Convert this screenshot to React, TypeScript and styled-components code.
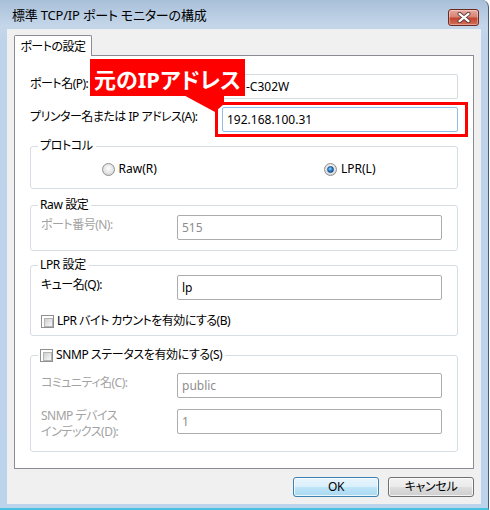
import React from 'react';
import styled, { createGlobalStyle } from 'styled-components';

const GlobalStyle = createGlobalStyle`
  html, body {
    margin: 0;
    padding: 0;
    background: #ffffff;
  }
  body {
    font-family: "Noto Sans", "Noto Sans CJK JP", sans-serif;
    font-size: 12px;
    font-feature-settings: "palt";
    color: #000000;
  }
  * {
    box-sizing: border-box;
  }
`;

const Window = styled.div`
  width: 489px;
  height: 510px;
  display: flex;
  flex-direction: column;
  padding: 0 7px 4px 7px;
  background: linear-gradient(to bottom, #a9c0d9 0px, #c4d6e9 26px, #bed3ea 40px, #bcd3ec 100%);
  border-right: 1px solid #4a5d73;
  border-bottom: 2px solid #48c3df;
  border-top-right-radius: 7px;
`;

const TitleBar = styled.div`
  height: 29px;
  flex: none;
  display: flex;
  align-items: flex-start;
  justify-content: space-between;
  padding: 0 2px 0 5px;
`;

const TitleText = styled.span`
  margin-top: 7px;
  font-size: 13px;
  line-height: 17px;
  letter-spacing: -0.2px;
  color: #000000;
`;

const CloseButton = styled.div`
  margin-top: 9px;
  width: 31px;
  height: 17px;
  border: 1px solid #6b2a24;
  border-radius: 3px;
  display: flex;
  align-items: center;
  justify-content: center;
  background: linear-gradient(to bottom, #e7aa9e 0%, #d98474 45%, #c2452f 55%, #d5705a 100%);
  box-shadow: inset 0 0 0 1px rgba(255, 255, 255, 0.35);
`;

const Client = styled.div`
  flex: 1;
  display: flex;
  flex-direction: column;
  background: #f0f0f0;
  padding: 6px 7px 7px 7px;
`;

const Tab = styled.div`
  align-self: flex-start;
  position: relative;
  z-index: 1;
  width: 78px;
  height: 21px;
  margin-bottom: -1px;
  display: flex;
  align-items: center;
  justify-content: center;
  letter-spacing: -0.5px;
  background: #ffffff;
  border: 1px solid #898c95;
  border-bottom: none;
  border-radius: 2px 2px 0 0;
`;

const Panel = styled.div`
  position: relative;
  flex: 1;
  background: #ffffff;
  border: 1px solid #898c95;
  padding: 18px 15px 16px 15px;
`;

const Row = styled.div<{ $label: number; $mt?: number }>`
  display: grid;
  grid-template-columns: ${p => p.$label}px 1fr;
  align-items: start;
  margin-top: ${p => p.$mt ?? 0}px;
`;

const Label = styled.div<{ $disabled?: boolean }>`
  padding-top: 2px;
  line-height: 16px;
  letter-spacing: -0.5px;
  color: ${p => (p.$disabled ? '#a2a2a2' : '#000000')};
  white-space: nowrap;
`;

const LabelLine = styled.span`
  display: block;
  height: 16px;
  line-height: 16px;
`;

const TwoLineLabel = styled(Label)`
  padding-top: 0;
  margin-top: -1px;
`;

const TextBox = styled.div<{ $tone?: 'plain' | 'soft' | 'focus'; $disabled?: boolean; $indent?: number }>`
  height: 25px;
  display: flex;
  align-items: center;
  padding: 0 4px 0 ${p => 4 + (p.$indent ?? 0)}px;
  border-radius: 2px;
  background: #ffffff;
  border: 1px solid
    ${p => (p.$tone === 'focus' ? '#8fbde6' : p.$tone === 'soft' ? '#d6dbe2' : '#acacac')};
  color: ${p => (p.$disabled ? '#8d8d8d' : '#000000')};
  white-space: nowrap;
  overflow: hidden;
`;

const Group = styled.fieldset<{ $mt: number; $pb: number }>`
  margin: ${p => p.$mt}px 0 0 0;
  padding: 0 15px ${p => p.$pb}px 10px;
  min-width: 0;
  border: 1px solid #d5dde5;
  border-radius: 3px;
`;

const Legend = styled.legend`
  margin-left: -3px;
  padding: 0 3px 0 2px;
  height: 16px;
  line-height: 16px;
  display: flex;
  align-items: center;
  gap: 3px;
  letter-spacing: -0.4px;
  color: #000000;
`;

const RadioRow = styled.div`
  margin-top: 7px;
  display: grid;
  grid-template-columns: 1fr 1fr;
  justify-items: center;
  height: 16px;
`;

const Option = styled.label<{ $shift?: number }>`
  display: flex;
  align-items: center;
  gap: 4px;
  line-height: 16px;
  transform: translateX(${p => p.$shift ?? 0}px);
`;

const RadioDot = styled.span<{ $checked?: boolean }>`
  position: relative;
  flex: none;
  width: 13px;
  height: 13px;
  border-radius: 50%;
  border: 1px solid #8e8f8f;
  background: radial-gradient(circle at 50% 40%, #fdfdfd 0%, #e4e4e4 55%, #c9c9c9 100%);

  &::after {
    content: '';
    position: absolute;
    inset: 2px;
    border-radius: 50%;
    display: ${p => (p.$checked ? 'block' : 'none')};
    border: 1px solid #1b4c82;
    background: radial-gradient(circle at 40% 35%, #9ad8ff 0%, #2a89da 45%, #0d4380 100%);
  }
`;

const CheckBox = styled.span`
  flex: none;
  width: 13px;
  height: 13px;
  border: 1px solid #8e8f8f;
  background: #ffffff;
  padding: 2px;

  &::after {
    content: '';
    display: block;
    width: 100%;
    height: 100%;
    border: 1px solid #b4b4b4;
    background: linear-gradient(135deg, #cfcfcf 0%, #e6e6e6 55%, #f8f8f8 100%);
  }
`;

const CheckRow = styled.label<{ $mt?: number }>`
  display: flex;
  align-items: center;
  gap: 3px;
  height: 16px;
  margin-top: ${p => p.$mt ?? 0}px;
  line-height: 16px;
  letter-spacing: -0.5px;
`;

const Footer = styled.div`
  display: flex;
  justify-content: flex-end;
  gap: 9px;
  margin-top: 8px;
`;

const Button = styled.button<{ $primary?: boolean }>`
  width: 86px;
  height: 20px;
  padding: 0;
  font: inherit;
  font-size: 12px;
  line-height: 16px;
  letter-spacing: -0.3px;
  color: #000000;
  border-radius: 3px;
  border: 1px solid ${p => (p.$primary ? '#3c7fb1' : '#707070')};
  box-shadow: inset 0 0 0 1px rgba(255, 255, 255, 0.75);
  background: ${p =>
    p.$primary
      ? 'linear-gradient(to bottom, #e9f5fc 0%, #d9effb 48%, #bde4f7 52%, #a9d9f3 100%)'
      : 'linear-gradient(to bottom, #f2f2f2 0%, #ebebeb 48%, #dddddd 52%, #cfcfcf 100%)'};
`;

const Callout = styled.div`
  position: absolute;
  left: 75px;
  top: 3px;
  width: 155px;
  height: 37px;
  background: #ff0000;
  color: #ffffff;
  font-size: 22px;
  font-weight: 700;
  display: flex;
  align-items: center;
  justify-content: center;
  z-index: 2;
`;

const CalloutTail = styled.svg`
  position: absolute;
  left: 160px;
  top: 34px;
  z-index: 2;
`;

const Highlight = styled.div`
  position: absolute;
  left: 200px;
  top: 46px;
  width: 253px;
  height: 35px;
  border: 3px solid #ff0000;
  pointer-events: none;
  z-index: 2;
`;

const App: React.FC = () => {
  return (
    <>
      <GlobalStyle />
      <Window>
        <TitleBar>
          <TitleText>標準 TCP/IP ポート モニターの構成</TitleText>
          <CloseButton>
            <svg width="14" height="11" viewBox="0 0 14 11">
              <path d="M2.5 1.8 L11.5 9.2 M11.5 1.8 L2.5 9.2" stroke="#5a3a36" strokeWidth="4" strokeLinecap="round" />
              <path d="M2.5 1.8 L11.5 9.2 M11.5 1.8 L2.5 9.2" stroke="#ffffff" strokeWidth="2.2" strokeLinecap="round" />
            </svg>
          </CloseButton>
        </TitleBar>

        <Client>
          <Tab>ポートの設定</Tab>
          <Panel>
            <Row $label={192}>
              <Label>ポート名(P):</Label>
              <TextBox $tone="soft" $indent={19}>-C302W</TextBox>
            </Row>
            <Row $label={192} $mt={8}>
              <Label>プリンター名または IP アドレス(A):</Label>
              <TextBox $tone="focus">192.168.100.31</TextBox>
            </Row>

            <Group $mt={6} $pb={11}>
              <Legend>プロトコル</Legend>
              <RadioRow>
                <Option $shift={-12}>
                  <RadioDot />
                  Raw(R)
                </Option>
                <Option $shift={8}>
                  <RadioDot $checked />
                  LPR(L)
                </Option>
              </RadioRow>
            </Group>

            <Group $mt={8} $pb={10}>
              <Legend>Raw 設定</Legend>
              <Row $label={136} $mt={2}>
                <Label $disabled>ポート番号(N):</Label>
                <TextBox $disabled>515</TextBox>
              </Row>
            </Group>

            <Group $mt={6} $pb={6}>
              <Legend>LPR 設定</Legend>
              <Row $label={136} $mt={2}>
                <Label>キュー名(Q):</Label>
                <TextBox>lp</TextBox>
              </Row>
              <CheckRow $mt={13}>
                <CheckBox />
                LPR バイト カウントを有効にする(B)
              </CheckRow>
            </Group>

            <Group $mt={11} $pb={11}>
              <Legend>
                <CheckBox />
                SNMP ステータスを有効にする(S)
              </Legend>
              <Row $label={136} $mt={10}>
                <Label $disabled>コミュニティ名(C):</Label>
                <TextBox $disabled>public</TextBox>
              </Row>
              <Row $label={136} $mt={11}>
                <TwoLineLabel $disabled>
                  <LabelLine>SNMP デバイス</LabelLine>
                  <LabelLine>インデックス(D):</LabelLine>
                </TwoLineLabel>
                <TextBox $disabled>1</TextBox>
              </Row>
            </Group>

            <Callout>元のIPアドレス</Callout>
            <CalloutTail width="55" height="26" viewBox="0 0 55 26">
              <polygon points="3,2 49,2 49,14 40,22" fill="#ff0000" />
            </CalloutTail>
            <Highlight />
          </Panel>

          <Footer>
            <Button $primary>OK</Button>
            <Button>キャンセル</Button>
          </Footer>
        </Client>
      </Window>
    </>
  );
};

export default App;
